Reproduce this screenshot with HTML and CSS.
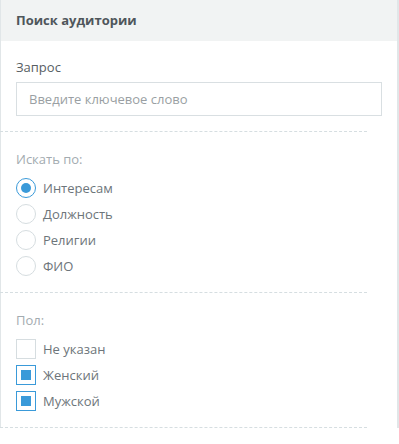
FILE: index.html
```html
<!DOCTYPE html>
<html lang="ru">
<head>
    <meta charset="UTF-8">
    <title>Поиск аудитории</title>
    <link rel="stylesheet" href="styles.css">
</head>
<body>
    <div class="panel">
        <div class="panel-head">Поиск аудитории</div>

        <div class="section section-query">
            <div class="label">Запрос</div>
            <input type="text" class="field" placeholder="Введите ключевое слово">
        </div>
        <div class="divider"></div>

        <div class="section">
            <div class="caption">Искать по:</div>
            <div class="options">
                <div class="option"><span class="radio checked"></span>Интересам</div>
                <div class="option"><span class="radio"></span>Должность</div>
                <div class="option"><span class="radio"></span>Религии</div>
                <div class="option"><span class="radio"></span>ФИО</div>
            </div>
        </div>
        <div class="divider"></div>

        <div class="section">
            <div class="caption">Пол:</div>
            <div class="options">
                <div class="option"><span class="check"></span>Не указан</div>
                <div class="option"><span class="check checked"></span>Женский</div>
                <div class="option"><span class="check checked"></span>Мужской</div>
            </div>
        </div>
        <div class="divider"></div>
    </div>
</body>
</html>
```

FILE: styles.css
```css
body {
    margin: 0;
    background: #fff;
    font-family: "Open Sans", Roboto, sans-serif;
    font-size: 13px;
}
.panel {
    width: 396px;
    border-left: 1px solid #e1e6e8;
    border-right: 2px solid #e1e6e8;
}
.panel-head {
    height: 41px;
    line-height: 40px;
    padding-left: 15px;
    background: #f1f3f3;
    color: #4f565b;
    font-weight: bold;
}
.section {
    padding: 15px 15px 16px 15px;
}
.section-query {
    padding-top: 17px;
    padding-bottom: 15px;
}
.label {
    color: #575e63;
    line-height: 18px;
    margin-bottom: 6px;
}
.field {
    display: block;
    box-sizing: border-box;
    width: 366px;
    height: 34px;
    margin: 0;
    padding: 0 12px;
    border: 1px solid #d9dfe2;
    font-family: inherit;
    font-size: 13px;
    color: #555;
    outline: none;
}
.field::placeholder {
    color: #9a9fa3;
}
.divider {
    width: 367px;
    margin-left: -1px;
    border-top: 1px dashed #d6dee1;
}
.caption {
    color: #a3abb0;
    line-height: 20px;
    margin-top: 2px;
    margin-bottom: 9px;
}
.options {
    display: flex;
    flex-direction: column;
    gap: 6px;
}
.option {
    display: flex;
    align-items: center;
    gap: 7px;
    height: 20px;
    color: #6d757a;
}
.radio, .check {
    box-sizing: border-box;
    width: 20px;
    height: 20px;
    border: 1px solid #d6dde0;
    display: flex;
    align-items: center;
    justify-content: center;
    flex-shrink: 0;
}
.radio {
    border-radius: 50%;
}
.radio.checked, .check.checked {
    border-color: #3a9ad9;
}
.radio.checked::after {
    content: "";
    width: 10px;
    height: 10px;
    border-radius: 50%;
    background: #3a9ad9;
}
.check.checked::after {
    content: "";
    width: 10px;
    height: 10px;
    background: #3a9ad9;
}
```
